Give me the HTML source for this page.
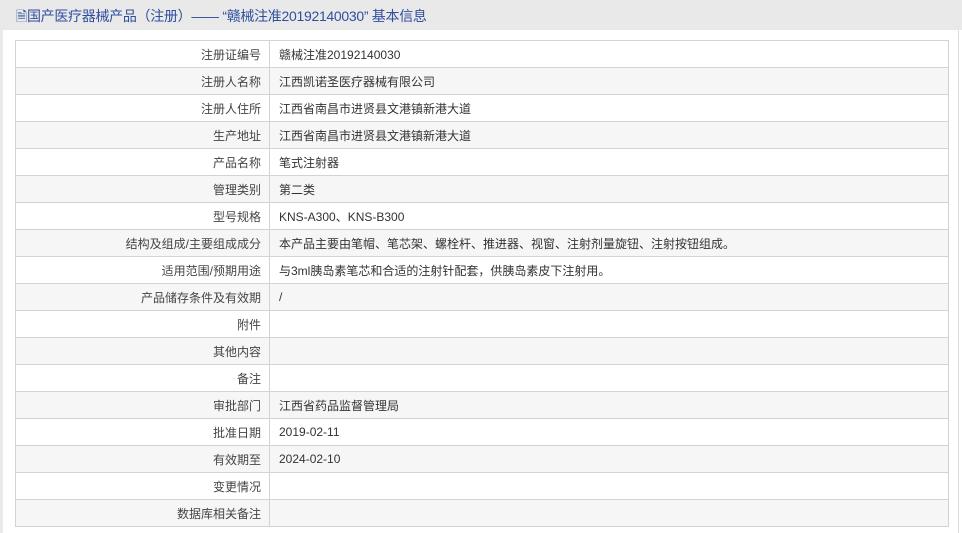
<!DOCTYPE html>
<html><head><meta charset="utf-8"><style>
body{margin:0;width:962px;height:533px;background:#fff;font-family:"Liberation Sans","Noto Sans CJK SC",sans-serif;overflow:hidden;position:relative}
.hd{position:absolute;left:0;top:0;width:962px;height:30px;background:#e9e9e9;}
.hd span{position:absolute;left:16px;top:6px;font-size:14px;color:#2f4e9e;white-space:nowrap;letter-spacing:-0.3px}
.side{position:absolute;left:0;top:30px;width:3px;height:503px;background:#e9e9e9}
.rside{position:absolute;left:958px;top:30px;width:1px;height:503px;background:#ddd}
table{position:absolute;left:15px;top:40px;width:934px;border-collapse:collapse;font-size:12px;table-layout:fixed}
td{height:26px;border:1px solid #d3d3d3;padding:0;color:#333}
td.l{width:245px;text-align:right;padding-right:8px;color:#444}
td.v{padding-left:9px}
tr:nth-child(even) td{background:#f6f6f6}
</style></head><body>
<div class="hd"><span>🗎国产医疗器械产品（注册）—— “赣械注准20192140030” 基本信息</span></div>
<div class="side"></div><div class="rside"></div>
<table>
<tr><td class="l">注册证编号</td><td class="v">赣械注准20192140030</td></tr>
<tr><td class="l">注册人名称</td><td class="v">江西凯诺圣医疗器械有限公司</td></tr>
<tr><td class="l">注册人住所</td><td class="v">江西省南昌市进贤县文港镇新港大道</td></tr>
<tr><td class="l">生产地址</td><td class="v">江西省南昌市进贤县文港镇新港大道</td></tr>
<tr><td class="l">产品名称</td><td class="v">笔式注射器</td></tr>
<tr><td class="l">管理类别</td><td class="v">第二类</td></tr>
<tr><td class="l">型号规格</td><td class="v">KNS-A300、KNS-B300</td></tr>
<tr><td class="l">结构及组成/主要组成成分</td><td class="v">本产品主要由笔帽、笔芯架、螺栓杆、推进器、视窗、注射剂量旋钮、注射按钮组成。</td></tr>
<tr><td class="l">适用范围/预期用途</td><td class="v">与3ml胰岛素笔芯和合适的注射针配套，供胰岛素皮下注射用。</td></tr>
<tr><td class="l">产品储存条件及有效期</td><td class="v">/</td></tr>
<tr><td class="l">附件</td><td class="v"></td></tr>
<tr><td class="l">其他内容</td><td class="v"></td></tr>
<tr><td class="l">备注</td><td class="v"></td></tr>
<tr><td class="l">审批部门</td><td class="v">江西省药品监督管理局</td></tr>
<tr><td class="l">批准日期</td><td class="v">2019-02-11</td></tr>
<tr><td class="l">有效期至</td><td class="v">2024-02-10</td></tr>
<tr><td class="l">变更情况</td><td class="v"></td></tr>
<tr><td class="l">数据库相关备注</td><td class="v"></td></tr>
</table>
</body></html>
